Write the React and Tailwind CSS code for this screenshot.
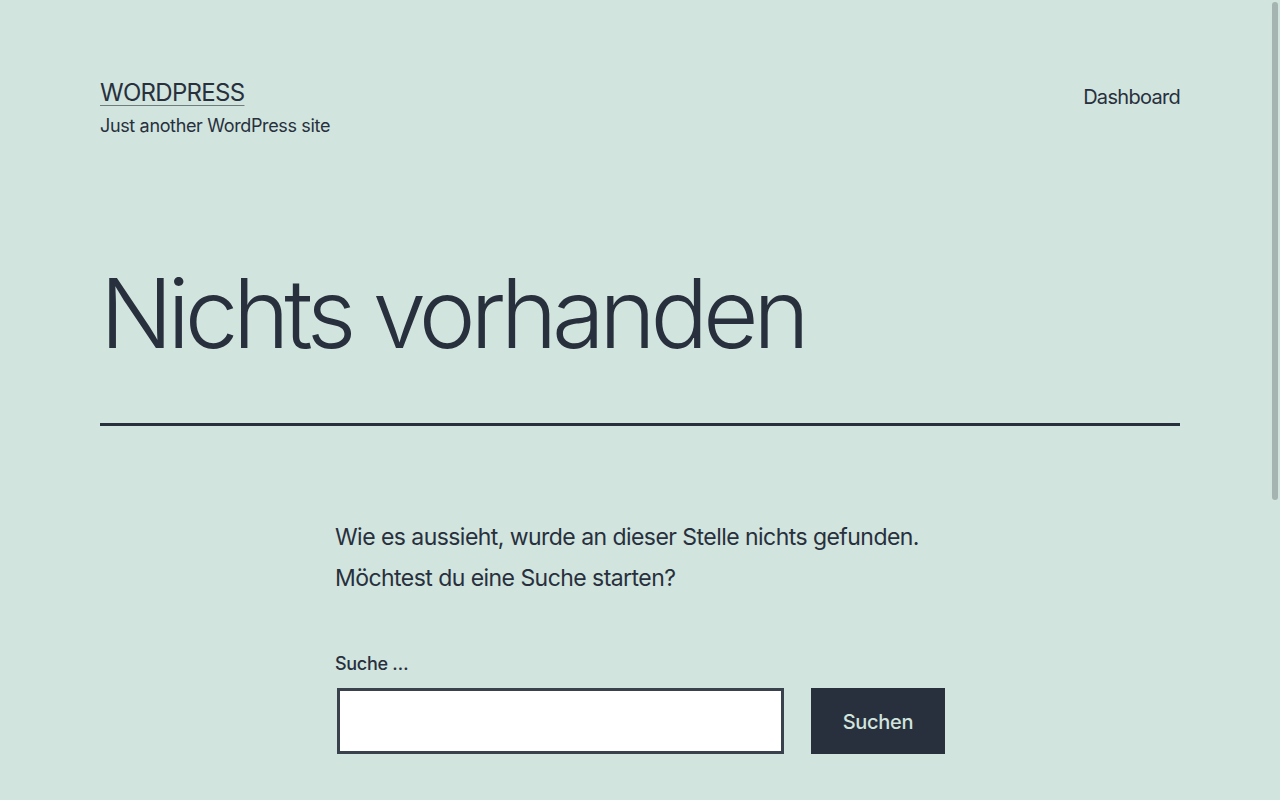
export default function App() {
  return (
    <div
      className="relative h-[800px] overflow-hidden bg-[#d1e4dd] text-[#28303d]"
      style={{ fontFamily: 'Inter, "Liberation Sans", sans-serif' }}
    >
      {/* Header */}
      <header className="flex items-start justify-between px-[100px] pt-[77px]">
        <div>
          <a
            href="#"
            className="block text-[24px] leading-[31px] tracking-[-0.7px] uppercase underline decoration-[1px] decoration-[#6f7c7c] underline-offset-[4px]"
          >
            WordPress
          </a>
          <p className="mt-[5px] text-[18px] leading-[25px] tracking-[-0.35px]">Just another WordPress site</p>
        </div>
        <nav className="mt-[5px] text-[20px] leading-[30px] tracking-[-0.7px]">
          <a href="#">Dashboard</a>
        </nav>
      </header>

      {/* Page title */}
      <main className="px-[100px]">
        <h1 className="mt-[122px] text-[96px] leading-[106px] font-light tracking-[-5.3px]">
          Nichts vorhanden
        </h1>
        <hr className="mt-[57px] h-[3px] border-0 bg-[#28303d]" />

        <div className="mx-auto mt-[91px] w-[610px]">
          <p className="text-[23px] leading-[41px] tracking-[-0.55px]">
            Wie es aussieht, wurde an dieser Stelle nichts gefunden.
            <br />
            Möchtest du eine Suche starten?
          </p>

          <form className="mt-[52px]" onSubmit={e => e.preventDefault()}>
            <label htmlFor="s" className="block text-[18px] leading-[25px] font-medium tracking-[-0.3px]">
              Suche …
            </label>
            <div className="mt-[12px] flex items-stretch gap-[27px]">
              <input
                id="s"
                type="search"
                className="ml-[2px] h-[66px] w-[447px] border-[3px] border-[#39414d] bg-white px-3 text-[20px] outline-none"
              />
              <button
                type="submit"
                className="h-[66px] w-[134px] bg-[#28303d] pt-[2px] text-[20px] font-medium tracking-[-0.3px] text-[#d1e4dd]"
              >
                Suchen
              </button>
            </div>
          </form>
        </div>
      </main>

      {/* overlay scrollbar thumb */}
      <div className="absolute right-[2px] top-[2px] h-[498px] w-[6px] rounded-full bg-[#a5b4b0]" />
    </div>
  )
}
